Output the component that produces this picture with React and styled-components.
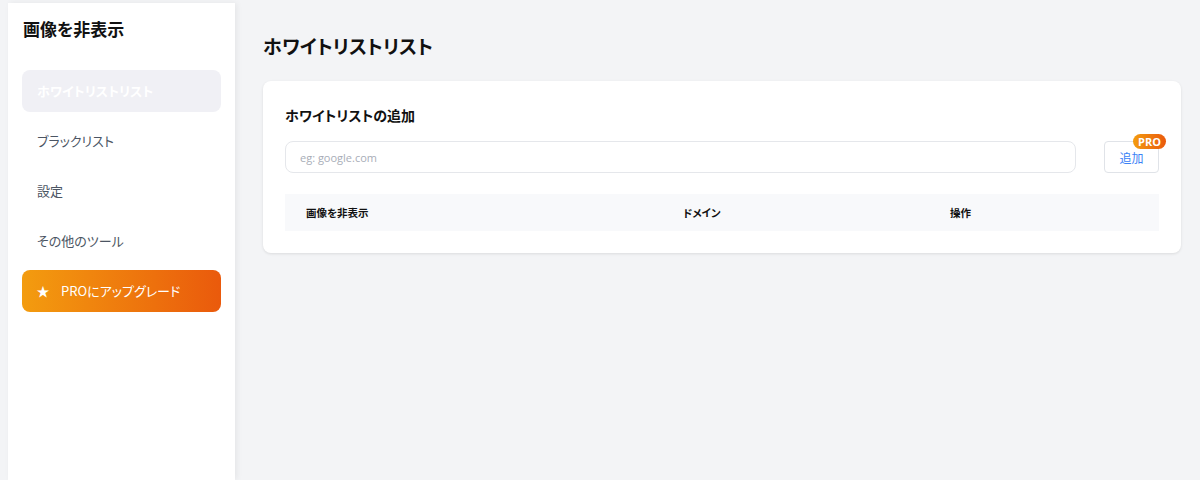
import React from "react";
import styled, { createGlobalStyle } from "styled-components";

const Global = createGlobalStyle`
  html, body { margin: 0; padding: 0; background: #f3f4f6; }
  body {
    font-family: "Noto Sans CJK JP", "Noto Sans", sans-serif;
    font-feature-settings: "palt";
    color: #111827;
  }
  * { box-sizing: border-box; }
`;

const Page = styled.div`
  display: flex;
  padding: 3px 0 0 8px;
  min-height: 100vh;
`;

const Sidebar = styled.aside`
  width: 227px;
  flex-shrink: 0;
  height: calc(100vh - 3px);
  background: #fff;
  box-shadow: 2px 0 6px rgba(0, 0, 0, 0.06);
  padding: 13px 14px 0 14px;
  display: flex;
  flex-direction: column;
`;

const Brand = styled.h1`
  margin: 0 0 0 1px;
  font-size: 17px;
  line-height: 26px;
  font-weight: 700;
  color: #111;
`;

const Nav = styled.nav`
  display: flex;
  flex-direction: column;
  gap: 8px;
  margin-top: 28px;
`;

const NavItem = styled.div`
  height: 42px;
  border-radius: 8px;
  display: flex;
  align-items: center;
  padding-left: 15px;
  padding-bottom: 1px;
  font-size: 13px;
  font-weight: ${(p) => (p.$active ? 700 : 400)};
  color: ${(p) => (p.$active ? "#fff" : "#4b5563")};
  background: ${(p) => (p.$active ? "#f0f0f5" : "transparent")};
`;

const ProItem = styled(NavItem)`
  background: linear-gradient(90deg, #f39c0f, #ea5a0c);
  color: #fff;
  gap: 12px;
`;

const Star = styled.span`
  font-size: 13px;
  width: 12px;
  display: inline-flex;
  justify-content: center;
`;

const Main = styled.main`
  flex: 1;
  padding: 29px 19px 0 28px;
`;

const Heading = styled.h2`
  margin: 0;
  font-size: 19px;
  line-height: 28px;
  font-weight: 700;
  color: #111;
`;

const Card = styled.section`
  margin-top: 21px;
  background: #fff;
  border-radius: 8px;
  box-shadow: 0 1px 3px rgba(0, 0, 0, 0.1);
  padding: 23px 22px 22px;
`;

const CardTitle = styled.h3`
  margin: 0;
  font-size: 14px;
  line-height: 22px;
  font-weight: 700;
  color: #111;
`;

const InputRow = styled.div`
  display: flex;
  align-items: center;
  gap: 28px;
  margin-top: 15px;
`;

const Input = styled.input`
  flex: 1;
  height: 32px;
  border: 1px solid #e5e7eb;
  border-radius: 8px;
  padding: 0 14px;
  font-family: "Open Sans", "Noto Sans", sans-serif;
  font-size: 11px;
  outline: none;
  &::placeholder { color: #a8adb7; }
`;

const AddButton = styled.button`
  position: relative;
  width: 55px;
  height: 32px;
  border: 1px solid #e0e3e8;
  border-radius: 4px;
  background: #fff;
  color: #3b82f6;
  font-family: "Noto Sans CJK JP", sans-serif;
  font-size: 12px;
  padding: 0;
`;

const Badge = styled.span`
  position: absolute;
  top: -8px;
  right: -8px;
  height: 15px;
  padding: 0 5px;
  border-radius: 8px;
  background: linear-gradient(90deg, #f39c0f, #ea5a0c);
  color: #fff;
  font-family: "Open Sans", sans-serif;
  font-size: 11px;
  font-weight: 700;
  line-height: 15px;
`;

const Table = styled.div`
  margin-top: 21px;
`;

const HeaderRow = styled.div`
  display: grid;
  grid-template-columns: 377px 267px 1fr;
  height: 37px;
  align-items: center;
  background: #f8f9fb;
`;

const HeaderCell = styled.div`
  padding-left: 21px;
  font-size: 10.5px;
  font-weight: 700;
  color: #111;
`;

export default function App() {
  return (
    <>
      <Global />
      <Page>
        <Sidebar>
          <Brand>画像を非表示</Brand>
          <Nav>
            <NavItem $active>ホワイトリストリスト</NavItem>
            <NavItem>ブラックリスト</NavItem>
            <NavItem>設定</NavItem>
            <NavItem>その他のツール</NavItem>
            <ProItem>
              <Star>★</Star>
              PROにアップグレード
            </ProItem>
          </Nav>
        </Sidebar>
        <Main>
          <Heading>ホワイトリストリスト</Heading>
          <Card>
            <CardTitle>ホワイトリストの追加</CardTitle>
            <InputRow>
              <Input placeholder="eg: google.com" />
              <AddButton>
                追加
                <Badge>PRO</Badge>
              </AddButton>
            </InputRow>
            <Table>
              <HeaderRow>
                <HeaderCell>画像を非表示</HeaderCell>
                <HeaderCell>ドメイン</HeaderCell>
                <HeaderCell>操作</HeaderCell>
              </HeaderRow>
            </Table>
          </Card>
        </Main>
      </Page>
    </>
  );
}
